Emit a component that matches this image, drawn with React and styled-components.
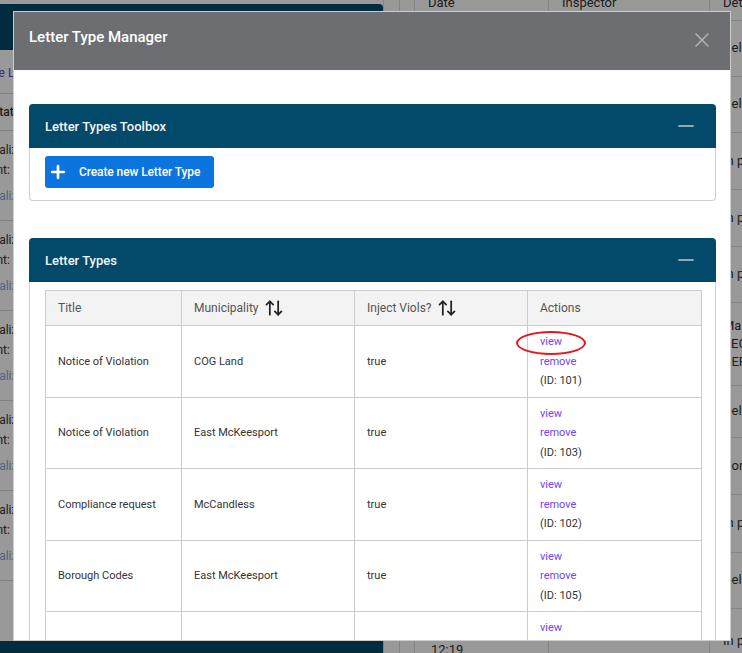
import styled, { createGlobalStyle } from 'styled-components';
import { ArrowUpDown, Minus, Plus, X } from 'lucide-react';

const letterTypes = [
  { id: 101, title: 'Notice of Violation', municipality: 'COG Land', inject: 'true', marked: true },
  { id: 103, title: 'Notice of Violation', municipality: 'East McKeesport', inject: 'true' },
  { id: 102, title: 'Compliance request', municipality: 'McCandless', inject: 'true' },
  { id: 105, title: 'Borough Codes', municipality: 'East McKeesport', inject: 'true' },
  { id: 106, title: 'Final Notice', municipality: 'COG Land', inject: 'false' },
];

const letterItems = [1, 2, 3, 4, 5];

const logRows = [
  { h: 56, detail: ['Delivered'] },
  { h: 56, detail: ['Delivered'] },
  { h: 57, detail: ['In person'] },
  { h: 57, detail: ['In person'] },
  { h: 56, detail: ['In person'] },
  { h: 83, detail: ['Mail', 'REG', 'CERT'] },
  { h: 52, detail: ['Delivered'] },
  { h: 57, detail: ['Con'] },
  { h: 58, detail: ['In person'] },
  { h: 56, detail: ['Delivered'] },
  { h: 66, detail: ['In person'], date: ['2021-03-04', '12:19'] },
];

function App() {
  return (
    <>
      <GlobalStyle />
      <Page>
        <LeftColumn>
          <NavCard />
          <CreateRow>
            <CreateLink>Create Letter</CreateLink>
          </CreateRow>
          <StatusRow>Status</StatusRow>
          {letterItems.map((n) => (
            <LetterItem key={n}>
              <ItemLine>Finalized:</ItemLine>
              <ItemLine>Sent:</ItemLine>
              <FinalizeLink>Finalize</FinalizeLink>
            </LetterItem>
          ))}
          <Footer />
        </LeftColumn>

        <RightColumn>
          <LogTable>
            <thead>
              <tr>
                <LogHead $w={16} />
                <LogHead $w={15} />
                <LogHead $w={134}>Date</LogHead>
                <LogHead $w={161}>Inspector</LogHead>
                <LogHead $w={60}>Details</LogHead>
              </tr>
            </thead>
            <tbody>
              {logRows.map((row, i) => (
                <tr key={i} style={{ height: row.h }}>
                  <LogCell />
                  <LogCell />
                  <LogCell $date>
                    {row.date &&
                      row.date.map((d) => <div key={d}>{d}</div>)}
                  </LogCell>
                  <LogCell />
                  <LogCell>
                    {row.detail.map((d) => (
                      <div key={d}>{d}</div>
                    ))}
                  </LogCell>
                </tr>
              ))}
            </tbody>
          </LogTable>
        </RightColumn>
      </Page>

      <Overlay />

      <Modal>
        <ModalHeader>
          <ModalTitle>Letter Type Manager</ModalTitle>
          <CloseButton>
            <X size={24} strokeWidth={1.4} />
          </CloseButton>
        </ModalHeader>

        <ModalBody>
          <Panel $gap={37}>
            <PanelHeader>
              <PanelTitle>Letter Types Toolbox</PanelTitle>
              <Minus size={24} strokeWidth={1.7} color="#b9cad4" />
            </PanelHeader>
            <ToolboxBody>
              <CreateButton>
                <Plus size={20} strokeWidth={3.2} />
                Create new Letter Type
              </CreateButton>
            </ToolboxBody>
          </Panel>

          <Panel>
            <PanelHeader>
              <PanelTitle>Letter Types</PanelTitle>
              <Minus size={24} strokeWidth={1.7} color="#b9cad4" />
            </PanelHeader>
            <TableBody>
              <TypesTable>
                <colgroup>
                  <col style={{ width: 136 }} />
                  <col style={{ width: 173 }} />
                  <col style={{ width: 173 }} />
                  <col style={{ width: 174 }} />
                </colgroup>
                <thead>
                  <tr>
                    <HeadCell>Title</HeadCell>
                    <HeadCell>
                      <SortLabel>
                        Municipality
                        <ArrowUpDown size={20} strokeWidth={2.1} color="#222" />
                      </SortLabel>
                    </HeadCell>
                    <HeadCell>
                      <SortLabel>
                        Inject Viols?
                        <ArrowUpDown size={20} strokeWidth={2.1} color="#222" />
                      </SortLabel>
                    </HeadCell>
                    <HeadCell>Actions</HeadCell>
                  </tr>
                </thead>
                <tbody>
                  {letterTypes.map((item) => (
                    <tr key={item.id}>
                      <Cell>{item.title}</Cell>
                      <Cell>{item.municipality}</Cell>
                      <Cell>{item.inject}</Cell>
                      <Cell>
                        <ActionLine>
                          <ActionLink>
                            view
                            {item.marked && <Annotation />}
                          </ActionLink>
                        </ActionLine>
                        <ActionLine>
                          <ActionLink>remove</ActionLink>
                        </ActionLine>
                        <ActionLine>(ID: {item.id})</ActionLine>
                      </Cell>
                    </tr>
                  ))}
                </tbody>
              </TypesTable>
            </TableBody>
          </Panel>
        </ModalBody>
      </Modal>
    </>
  );
}

export default App;

/* ================= styled ================= */

const GlobalStyle = createGlobalStyle`
  * { box-sizing: border-box; }
  html, body {
    margin: 0;
    height: 100%;
    overflow: hidden;
  }
  body {
    font-family: Roboto, 'Liberation Sans', Arial, sans-serif;
    background: #fff;
  }
`;

/* background page */

const Page = styled.div`
  display: flex;
  height: 653px;
  margin-left: -30px;
  overflow: hidden;
  background: #fff;
  color: #333;
  font-size: 12px;
`;

const LeftColumn = styled.div`
  width: 413px;
  flex-shrink: 0;
  display: flex;
  flex-direction: column;
  padding-top: 4px;
`;

const NavCard = styled.div`
  height: 46px;
  background: #034a6a;
  border-top-right-radius: 4px;
`;

const CreateRow = styled.div`
  padding: 13px 0 10px;
  border-bottom: 1px solid #d6d6d6;
  line-height: 20px;
`;

const CreateLink = styled.span`
  color: #5a3de8;
`;

const StatusRow = styled.div`
  padding: 8px 0 8px 22px;
  line-height: 20px;
  border-bottom: 1px solid #d6d6d6;
  font-weight: 500;
`;

const LetterItem = styled.div`
  padding: 9px 0 14px 13px;
  border-bottom: 1px solid #d6d6d6;
`;

const ItemLine = styled.div`
  line-height: 20px;
`;

const FinalizeLink = styled.div`
  margin-top: 6px;
  line-height: 20px;
  color: #86a8d8;
`;

const Footer = styled.div`
  margin-top: auto;
  height: 12px;
  background: #034a6a;
`;

const RightColumn = styled.div`
  flex: 1;
  overflow: hidden;
`;

const LogTable = styled.table`
  border-collapse: collapse;
  margin-top: -14px;
  font-size: 13px;
  color: #333;
`;

const LogHead = styled.th`
  width: ${({ $w }) => $w}px;
  min-width: ${({ $w }) => $w}px;
  height: 34px;
  padding: 0 0 0 13px;
  text-align: left;
  font-weight: 400;
  border: 1px solid #ddd;
  border-top: none;
  white-space: nowrap;
`;

const LogCell = styled.td`
  padding: 0 0 0 ${({ $date }) => ($date ? 16 : 13)}px;
  border: 1px solid #ddd;
  vertical-align: middle;
  line-height: 18px;
  white-space: nowrap;
`;

const Overlay = styled.div`
  position: fixed;
  inset: 0;
  background: rgba(0, 0, 0, 0.4);
`;

/* modal */

const Modal = styled.div`
  position: fixed;
  top: 11px;
  left: 13px;
  width: 718px;
  height: 630px;
  background: #fff;
  border: 1px solid #cdcdcd;
  display: flex;
  flex-direction: column;
  overflow: hidden;
`;

const ModalHeader = styled.div`
  flex-shrink: 0;
  height: 58px;
  background: #6d6e72;
  display: flex;
  justify-content: space-between;
  align-items: flex-start;
  padding: 15px 16px 0 15px;
`;

const ModalTitle = styled.h2`
  margin: 0;
  font-size: 15px;
  line-height: 20px;
  font-weight: 500;
  color: #fff;
`;

const CloseButton = styled.button`
  border: none;
  background: none;
  padding: 0;
  margin-top: 1px;
  display: flex;
  color: #b5b5b8;
  cursor: pointer;
`;

const ModalBody = styled.div`
  flex: 1;
  overflow: hidden;
  padding: 34px 14px 0 15px;
`;

const Panel = styled.section`
  margin-bottom: ${({ $gap }) => $gap || 0}px;
`;

const PanelHeader = styled.div`
  height: 44px;
  background: #034a6a;
  border-radius: 4px 4px 0 0;
  padding: 0 18px 0 16px;
  display: flex;
  align-items: center;
  justify-content: space-between;
`;

const PanelTitle = styled.h3`
  margin: 0;
  font-size: 13px;
  font-weight: 500;
  color: #f2f5f7;
`;

const ToolboxBody = styled.div`
  border: 1px solid #cfcfcf;
  border-top: none;
  border-radius: 0 0 4px 4px;
  padding: 8px 15px 12px;
`;

const CreateButton = styled.button`
  height: 32px;
  border: none;
  border-radius: 3px;
  background: #0b74de;
  color: #fff;
  display: flex;
  align-items: center;
  gap: 11px;
  padding: 0 14px 0 3px;
  font-family: inherit;
  font-size: 12px;
  font-weight: 500;
  letter-spacing: -0.1px;
  cursor: pointer;
`;

const TableBody = styled.div`
  border: 1px solid #cfcfcf;
  border-top: none;
  padding: 8px 14px 0 15px;
`;

const TypesTable = styled.table`
  width: 656px;
  border-collapse: collapse;
  table-layout: fixed;
`;

const HeadCell = styled.th`
  height: 35px;
  padding: 0 13px 0 12px;
  background: #f3f3f3;
  border: 1px solid #cccccc;
  text-align: left;
  font-size: 12px;
  font-weight: 400;
  color: #555;
`;

const SortLabel = styled.span`
  display: inline-flex;
  align-items: center;
  gap: 5px;
`;

const Cell = styled.td`
  height: 71.5px;
  padding: 0 13px 0 12px;
  border: 1px solid #cccccc;
  font-size: 11px;
  color: #333;
  vertical-align: middle;
`;

const ActionLine = styled.div`
  line-height: 19.5px;
`;

const ActionLink = styled.span`
  position: relative;
  color: #7043ff;
  cursor: pointer;
`;

const Annotation = styled.span`
  position: absolute;
  left: -24px;
  top: -4px;
  width: 70px;
  height: 24px;
  border: 2px solid #e3191d;
  border-radius: 50%;
`;
